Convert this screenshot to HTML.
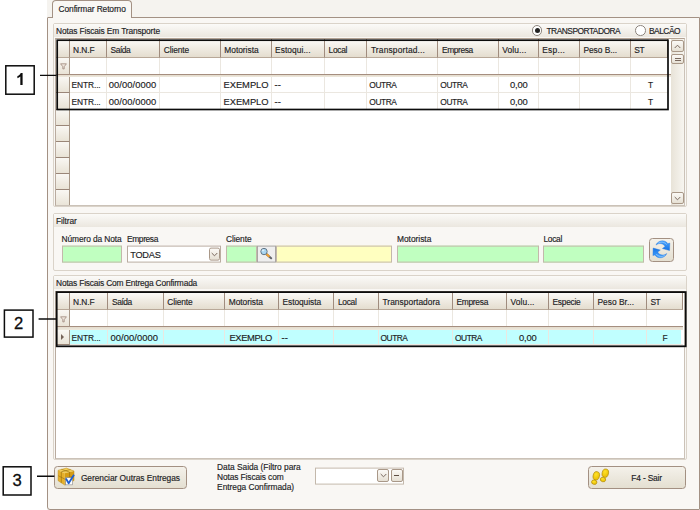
<!DOCTYPE html>
<html><head><meta charset="utf-8"><title>Confirmar Retorno</title>
<style>
html,body{margin:0;padding:0;}
body{width:700px;height:510px;background:#fff;position:relative;overflow:hidden;font-family:"Liberation Sans",sans-serif;font-size:8.4px;color:#1c1c24;-webkit-text-stroke:0.15px #1c1c24;}
div,span{position:absolute;box-sizing:border-box;white-space:nowrap;}
svg{position:absolute;overflow:visible;}
.bg{left:46.5px;top:0;width:653.5px;height:510px;background:#f5f3ef;}
.panel{left:47px;top:17px;width:652.5px;height:492.5px;border:1px solid #a39184;border-radius:1px 0 1px 3px;background:#f9f7f4;}
.tab{left:52px;top:0px;width:80px;height:18px;border:1px solid #a39184;border-bottom:none;border-radius:4px 4px 0 0;background:#f9f7f4;}
.grp{border:1px solid #dad3c9;border-radius:2px;background:#f9f7f4;}
.cap{left:0;top:0;right:0;height:13px;background:linear-gradient(#fbfaf8,#ebe7df);}
.grid{border:1px solid #cbc2b8;border-top-color:#b3a394;border-left-color:#b9ab9f;background:#fff;overflow:hidden;}
.hc{background:linear-gradient(#fcfbf9 0%,#f1ede5 45%,#e4ddcf 100%);border-right:1px solid #a08c7e;border-bottom:1px solid #b8a898;}
.ind{background:linear-gradient(#f9f7f3,#e9e3d6);border-right:1px solid #a89888;border-bottom:1px solid #9a8678;}
.vl{width:1px;background:#ebe7e0;}
.hl{height:1px;background:#ebe7e0;}
.sep{height:4px;background:linear-gradient(#e3dbcc,#eee9de);border-top:1px solid #a58e7f;}
.c2{font-size:9.4px;}
.inp{height:17px;border:1px solid #c3b8ab;transform:translateY(0.6px);}
.green{background:#c0ffc0;}
.yellow{background:#ffffc0;}
.btn{border:1px solid #a39082;border-radius:3.5px;background:linear-gradient(#f4f1ea,#e4dfd1);}
.sb{border:1px solid #a99888;border-radius:2px;background:linear-gradient(#fbf9f6,#e6e0d4);}
</style></head><body>
<div class="bg"></div>
<div class="panel"></div>
<div class="tab"></div>
<div style="left:53px;top:17px;width:78px;height:2px;background:#f9f7f4"></div>
<span  style="left:58.6px;top:3.6px;letter-spacing:-0.105px;">Confirmar Retorno</span>
<div class="grp" style="left:53px;top:23px;width:634px;height:184px;"><div class="cap"></div></div>
<span  style="left:56.1px;top:26px;letter-spacing:-0.134px;">Notas Fiscais Em Transporte</span>
<div style="left:531.7px;top:25.3px;width:10.6px;height:10.6px;border:1px solid #8d857e;border-radius:50%;background:#fff;"></div>
<div style="left:534.5px;top:28px;width:5px;height:5px;border-radius:50%;background:#222;"></div>
<span  style="left:546.5px;top:26.3px;letter-spacing:-0.5px;">TRANSPORTADORA</span>
<div style="left:635.3px;top:25.3px;width:10.6px;height:10.6px;border:1px solid #8d857e;border-radius:50%;background:#fff;"></div>
<span  style="left:649px;top:26.3px;letter-spacing:-0.497px;">BALCÃO</span>
<div class="grid" style="left:55px;top:38px;width:630px;height:168px;">
<div class="hc" style="left:0;top:0;width:13.5px;height:18.5px;"></div>
<div class="hc" style="left:13.5px;top:0;width:37.0px;height:18.5px;"></div>
<div class="hc" style="left:50.5px;top:0;width:53.5px;height:18.5px;"></div>
<div class="hc" style="left:104px;top:0;width:61px;height:18.5px;"></div>
<div class="hc" style="left:165px;top:0;width:50.5px;height:18.5px;"></div>
<div class="hc" style="left:215.5px;top:0;width:53.5px;height:18.5px;"></div>
<div class="hc" style="left:269px;top:0;width:41.5px;height:18.5px;"></div>
<div class="hc" style="left:310.5px;top:0;width:71.0px;height:18.5px;"></div>
<div class="hc" style="left:381.5px;top:0;width:61.5px;height:18.5px;"></div>
<div class="hc" style="left:443px;top:0;width:40px;height:18.5px;"></div>
<div class="hc" style="left:483px;top:0;width:41px;height:18.5px;"></div>
<div class="hc" style="left:524px;top:0;width:50.5px;height:18.5px;"></div>
<div class="hc" style="left:574.5px;top:0;width:37.5px;height:18.5px;"></div>
<div class="ind" style="left:0;top:18.5px;width:13.5px;height:16.0px;border-bottom:none;"></div>
<svg style="left:4.05px;top:24.1px" width="7" height="7" viewBox="0 0 7 7"><path d="M0.6 0.8H6.4L4.2 3.7V5.9H2.8V3.7Z" fill="#efe6dc" stroke="#9a8276" stroke-width="0.75"/></svg>
<div class="vl" style="left:49.5px;top:18.5px;height:16.0px;"></div>
<div class="vl" style="left:103px;top:18.5px;height:16.0px;"></div>
<div class="vl" style="left:164px;top:18.5px;height:16.0px;"></div>
<div class="vl" style="left:214.5px;top:18.5px;height:16.0px;"></div>
<div class="vl" style="left:268px;top:18.5px;height:16.0px;"></div>
<div class="vl" style="left:309.5px;top:18.5px;height:16.0px;"></div>
<div class="vl" style="left:380.5px;top:18.5px;height:16.0px;"></div>
<div class="vl" style="left:442px;top:18.5px;height:16.0px;"></div>
<div class="vl" style="left:482px;top:18.5px;height:16.0px;"></div>
<div class="vl" style="left:523px;top:18.5px;height:16.0px;"></div>
<div class="vl" style="left:573.5px;top:18.5px;height:16.0px;"></div>
<div class="sep" style="left:0;top:34.5px;width:615px;height:3.5999999999999943px;"></div>
<div class="ind" style="left:0;top:38px;width:13.5px;height:16px;"></div>
<div style="left:13.5px;top:38px;width:598.5px;height:15px;background:#fff;"></div>
<div class="vl" style="left:49.5px;top:38px;height:16px;"></div>
<div class="vl" style="left:103px;top:38px;height:16px;"></div>
<div class="vl" style="left:164px;top:38px;height:16px;"></div>
<div class="vl" style="left:214.5px;top:38px;height:16px;"></div>
<div class="vl" style="left:268px;top:38px;height:16px;"></div>
<div class="vl" style="left:309.5px;top:38px;height:16px;"></div>
<div class="vl" style="left:380.5px;top:38px;height:16px;"></div>
<div class="vl" style="left:442px;top:38px;height:16px;"></div>
<div class="vl" style="left:482px;top:38px;height:16px;"></div>
<div class="vl" style="left:523px;top:38px;height:16px;"></div>
<div class="vl" style="left:573.5px;top:38px;height:16px;"></div>
<div class="hl" style="left:13.5px;top:53px;width:598.5px;"></div>
<div class="ind" style="left:0;top:54px;width:13.5px;height:17px;"></div>
<div style="left:13.5px;top:54px;width:598.5px;height:16px;background:#fff;"></div>
<div class="vl" style="left:49.5px;top:54px;height:17px;"></div>
<div class="vl" style="left:103px;top:54px;height:17px;"></div>
<div class="vl" style="left:164px;top:54px;height:17px;"></div>
<div class="vl" style="left:214.5px;top:54px;height:17px;"></div>
<div class="vl" style="left:268px;top:54px;height:17px;"></div>
<div class="vl" style="left:309.5px;top:54px;height:17px;"></div>
<div class="vl" style="left:380.5px;top:54px;height:17px;"></div>
<div class="vl" style="left:442px;top:54px;height:17px;"></div>
<div class="vl" style="left:482px;top:54px;height:17px;"></div>
<div class="vl" style="left:523px;top:54px;height:17px;"></div>
<div class="vl" style="left:573.5px;top:54px;height:17px;"></div>
<div class="hl" style="left:13.5px;top:70px;width:598.5px;"></div>
<div class="ind" style="left:0;top:71px;width:13.5px;height:16px;"></div>
<div class="ind" style="left:0;top:87px;width:13.5px;height:16px;"></div>
<div class="ind" style="left:0;top:103px;width:13.5px;height:16px;"></div>
<div class="ind" style="left:0;top:119px;width:13.5px;height:16px;"></div>
<div class="ind" style="left:0;top:135px;width:13.5px;height:16px;"></div>
<div class="ind" style="left:0;top:151px;width:13.5px;height:17px;"></div>
<div style="left:614.5px;top:0;width:13.5px;height:166px;background:linear-gradient(90deg,#e8e3d8,#f7f5f0);"></div>
<div class="sb" style="left:615px;top:1px;width:13px;height:12px;"></div>
<svg style="left:618px;top:5px" width="7" height="5" viewBox="0 0 7 5"><path d="M0.7 4L3.5 1.2L6.3 4" fill="none" stroke="#7a695f" stroke-width="1"/></svg>
<div class="sb" style="left:615px;top:15px;width:13px;height:10px;"></div>
<div style="left:618.5px;top:18.5px;width:6px;height:1px;background:#7a695e;"></div>
<div style="left:618.5px;top:20.5px;width:6px;height:1px;background:#7a695e;"></div>
<div class="sb" style="left:615px;top:153px;width:13px;height:12px;"></div>
<svg style="left:618px;top:156.5px" width="7" height="5" viewBox="0 0 7 5"><path d="M0.7 1L3.5 3.8L6.3 1" fill="none" stroke="#7a695f" stroke-width="1"/></svg>
</div>
<span  style="left:73px;top:44.65px;letter-spacing:-0.055px;">N.N.F</span>
<span  style="left:110.6px;top:44.65px;letter-spacing:-0.438px;">Saída</span>
<span  style="left:163.7px;top:44.65px;letter-spacing:-0.097px;">Cliente</span>
<span  style="left:224.3px;top:44.65px;letter-spacing:-0.017px;">Motorista</span>
<span  style="left:275.1px;top:44.65px;letter-spacing:0.058px;">Estoqui...</span>
<span  style="left:328.6px;top:44.65px;letter-spacing:-0.306px;">Local</span>
<span  style="left:370.9px;top:44.65px;letter-spacing:0.169px;">Transportad...</span>
<span  style="left:442px;top:44.65px;letter-spacing:-0.374px;">Empresa</span>
<span  style="left:502.3px;top:44.65px;letter-spacing:0.117px;">Volu...</span>
<span  style="left:542.3px;top:44.65px;letter-spacing:0.23px;">Esp...</span>
<span  style="left:583.4px;top:44.65px;letter-spacing:-0.032px;">Peso B...</span>
<span  style="left:634.3px;top:44.65px;letter-spacing:-0.5px;">ST</span>
<span  style="left:71.6px;top:80.07000000000001px;letter-spacing:-0.112px;">ENTR...</span>
<span class="c2" style="left:108.8px;top:79.495px;letter-spacing:0.048px;">00/00/0000</span>
<span class="c2" style="left:223.5px;top:79.495px;letter-spacing:-0.047px;">EXEMPLO</span>
<span class="c2" style="left:274.5px;top:79.495px;letter-spacing:0.125px;">--</span>
<span  style="left:369.3px;top:80.07000000000001px;letter-spacing:-0.423px;">OUTRA</span>
<span  style="left:440.3px;top:80.07000000000001px;letter-spacing:-0.423px;">OUTRA</span>
<span class="c2" style="left:510px;top:79.495px;letter-spacing:-0.188px;">0,00</span>
<span  style="left:648px;top:80.07000000000001px;letter-spacing:-0.5px;">T</span>
<span  style="left:71.6px;top:96.57000000000001px;letter-spacing:-0.112px;">ENTR...</span>
<span class="c2" style="left:108.8px;top:95.995px;letter-spacing:0.048px;">00/00/0000</span>
<span class="c2" style="left:223.5px;top:95.995px;letter-spacing:-0.047px;">EXEMPLO</span>
<span class="c2" style="left:274.5px;top:95.995px;letter-spacing:0.125px;">--</span>
<span  style="left:369.3px;top:96.57000000000001px;letter-spacing:-0.423px;">OUTRA</span>
<span  style="left:440.3px;top:96.57000000000001px;letter-spacing:-0.423px;">OUTRA</span>
<span class="c2" style="left:510px;top:95.995px;letter-spacing:-0.188px;">0,00</span>
<span  style="left:648px;top:96.57000000000001px;letter-spacing:-0.5px;">T</span>
<div class="grp" style="left:53px;top:213px;width:634px;height:58px;"><div class="cap"></div></div>
<span  style="left:56.1px;top:216px;letter-spacing:-0.129px;">Filtrar</span>
<span  style="left:61.6px;top:233.9px;letter-spacing:-0.104px;">Número da Nota</span>
<div class="inp green" style="left:62px;top:245px;width:60px;"></div>
<span  style="left:127px;top:233.9px;letter-spacing:-0.359px;">Empresa</span>
<div class="inp" style="left:127px;top:245px;width:94px;background:#fff;border-color:#b9aca0;"></div>
<span  style="left:130.2px;top:249.7px;letter-spacing:-0.217px;font-size:9.2px;">TODAS</span>
<div class="sb" style="left:208.5px;top:247px;width:11px;height:13px;transform:translateY(0.6px);"></div>
<svg style="left:210.5px;top:252.1px" width="7" height="5" viewBox="0 0 7 5"><path d="M0.7 1L3.5 3.8L6.3 1" fill="none" stroke="#7a695f" stroke-width="1"/></svg>
<span  style="left:226px;top:233.9px;letter-spacing:-0.083px;">Cliente</span>
<div class="inp green" style="left:226px;top:245px;width:31px;"></div>
<div class="inp" style="left:257px;top:245px;width:19px;background:#efefef;border-color:#a9a6a2;"></div>
<svg style="left:250px;top:240px" width="35" height="28" viewBox="0 0 638 510"><path d="M305 262L385 332" stroke="#63676c" stroke-width="38" stroke-linecap="round"/><path d="M298 256L354 305" stroke="#f2a030" stroke-width="38"/><circle cx="255" cy="210" r="58" fill="#a9d6f2" stroke="#647482" stroke-width="18"/><ellipse cx="238" cy="190" rx="24" ry="17" fill="#e4f3fc" opacity="0.85"/></svg>
<div class="inp yellow" style="left:276px;top:245px;width:116px;"></div>
<span  style="left:397px;top:233.9px;letter-spacing:-0.017px;">Motorista</span>
<div class="inp green" style="left:397px;top:245px;width:142px;"></div>
<span  style="left:543.5px;top:233.9px;letter-spacing:-0.306px;">Local</span>
<div class="inp green" style="left:543px;top:245px;width:101px;"></div>
<div class="btn" style="left:649px;top:238px;width:25px;height:23.5px;"></div>
<svg style="left:640px;top:230px" width="50" height="40" viewBox="0 0 638 510"><defs><linearGradient id="rg" x1="0" y1="0" x2="0" y2="1"><stop offset="0" stop-color="#4aa6ff"/><stop offset="1" stop-color="#1672e4"/></linearGradient></defs>
<g id="ra" fill="url(#rg)" stroke="#1a6fdc" stroke-width="5" stroke-linejoin="round"><path d="M204 192C222 138 312 112 356 174L380 166L377 262L286 236L320 210C296 168 244 160 204 192Z"/><path d="M232 168C262 146 310 150 336 182" fill="none" stroke="#9fd0ff" stroke-width="9" stroke-linecap="round"/></g>
<use href="#ra" transform="rotate(180 272.5 246)"/></svg>
<div class="grp" style="left:53px;top:275px;width:634px;height:185px;"><div class="cap"></div></div>
<span  style="left:56.1px;top:278.0px;letter-spacing:-0.182px;">Notas Fiscais Com Entrega Confirmada</span>
<div class="grid" style="left:55px;top:291px;width:630px;height:168px;">
<div class="hc" style="left:0;top:0;width:13.5px;height:18px;"></div>
<div class="hc" style="left:13.5px;top:0;width:38.5px;height:18px;"></div>
<div class="hc" style="left:52px;top:0;width:55.5px;height:18px;"></div>
<div class="hc" style="left:107.5px;top:0;width:61.5px;height:18px;"></div>
<div class="hc" style="left:169px;top:0;width:53.5px;height:18px;"></div>
<div class="hc" style="left:222.5px;top:0;width:55.5px;height:18px;"></div>
<div class="hc" style="left:278px;top:0;width:44.5px;height:18px;"></div>
<div class="hc" style="left:322.5px;top:0;width:74.5px;height:18px;"></div>
<div class="hc" style="left:397px;top:0;width:53.5px;height:18px;"></div>
<div class="hc" style="left:450.5px;top:0;width:42.5px;height:18px;"></div>
<div class="hc" style="left:493px;top:0;width:44.5px;height:18px;"></div>
<div class="hc" style="left:537.5px;top:0;width:53.0px;height:18px;"></div>
<div class="hc" style="left:590.5px;top:0;width:36.5px;height:18px;"></div>
<div class="ind" style="left:0;top:18px;width:13.5px;height:16px;border-bottom:none;"></div>
<svg style="left:4.05px;top:23.6px" width="7" height="7" viewBox="0 0 7 7"><path d="M0.6 0.8H6.4L4.2 3.7V5.9H2.8V3.7Z" fill="#efe6dc" stroke="#9a8276" stroke-width="0.75"/></svg>
<div class="vl" style="left:51px;top:18px;height:16px;"></div>
<div class="vl" style="left:106.5px;top:18px;height:16px;"></div>
<div class="vl" style="left:168px;top:18px;height:16px;"></div>
<div class="vl" style="left:221.5px;top:18px;height:16px;"></div>
<div class="vl" style="left:277px;top:18px;height:16px;"></div>
<div class="vl" style="left:321.5px;top:18px;height:16px;"></div>
<div class="vl" style="left:396px;top:18px;height:16px;"></div>
<div class="vl" style="left:449.5px;top:18px;height:16px;"></div>
<div class="vl" style="left:492px;top:18px;height:16px;"></div>
<div class="vl" style="left:536.5px;top:18px;height:16px;"></div>
<div class="vl" style="left:589.5px;top:18px;height:16px;"></div>
<div class="sep" style="left:0;top:34px;width:627px;height:3.5px;"></div>
<div class="ind" style="left:0;top:38px;width:13.5px;height:15px;"></div>
<div style="left:5px;top:42.3px;width:0;height:0;border-left:3.5px solid #756257;border-top:3.1px solid transparent;border-bottom:3.1px solid transparent;"></div>
<div style="left:13.5px;top:38px;width:611.5px;height:14px;background:#c0ffff;"></div>
<div class="vl" style="left:51px;top:38px;height:15px;"></div>
<div class="vl" style="left:106.5px;top:38px;height:15px;"></div>
<div class="vl" style="left:168px;top:38px;height:15px;"></div>
<div class="vl" style="left:221.5px;top:38px;height:15px;"></div>
<div class="vl" style="left:277px;top:38px;height:15px;"></div>
<div class="vl" style="left:321.5px;top:38px;height:15px;"></div>
<div class="vl" style="left:396px;top:38px;height:15px;"></div>
<div class="vl" style="left:449.5px;top:38px;height:15px;"></div>
<div class="vl" style="left:492px;top:38px;height:15px;"></div>
<div class="vl" style="left:536.5px;top:38px;height:15px;"></div>
<div class="vl" style="left:589.5px;top:38px;height:15px;"></div>
<div class="hl" style="left:13.5px;top:52px;width:613.5px;"></div>
</div>
<span  style="left:73px;top:297.15000000000003px;letter-spacing:-0.055px;">N.N.F</span>
<span  style="left:112px;top:297.15000000000003px;letter-spacing:-0.418px;">Saída</span>
<span  style="left:167.3px;top:297.15000000000003px;letter-spacing:-0.111px;">Cliente</span>
<span  style="left:228.7px;top:297.15000000000003px;letter-spacing:-0.017px;">Motorista</span>
<span  style="left:282.5px;top:297.15000000000003px;letter-spacing:-0.061px;">Estoquista</span>
<span  style="left:338px;top:297.15000000000003px;letter-spacing:-0.306px;">Local</span>
<span  style="left:382.5px;top:297.15000000000003px;letter-spacing:0.039px;">Transportadora</span>
<span  style="left:456.5px;top:297.15000000000003px;letter-spacing:-0.288px;">Empresa</span>
<span  style="left:510.5px;top:297.15000000000003px;letter-spacing:0.103px;">Volu...</span>
<span  style="left:552.5px;top:297.15000000000003px;letter-spacing:-0.257px;">Especie</span>
<span  style="left:597.5px;top:297.15000000000003px;letter-spacing:0.019px;">Peso Br...</span>
<span  style="left:650.5px;top:297.15000000000003px;letter-spacing:-0.5px;">ST</span>
<span  style="left:71.6px;top:332.57px;letter-spacing:-0.112px;">ENTR...</span>
<span class="c2" style="left:110.5px;top:331.995px;letter-spacing:0.058px;">00/00/0000</span>
<span class="c2" style="left:229.5px;top:331.995px;letter-spacing:-0.404px;">EXEMPLO</span>
<span class="c2" style="left:281.5px;top:331.995px;letter-spacing:0.125px;">--</span>
<span  style="left:380.5px;top:332.57px;letter-spacing:-0.463px;">OUTRA</span>
<span  style="left:455px;top:332.57px;letter-spacing:-0.463px;">OUTRA</span>
<span class="c2" style="left:519px;top:331.995px;letter-spacing:-0.188px;">0,00</span>
<span  style="left:662.5px;top:332.57px;letter-spacing:-0.5px;">F</span>
<div class="btn" style="left:54px;top:466px;width:133px;height:22.5px;"></div>
<span  style="left:80.9px;top:473.2px;letter-spacing:-0.04px;">Gerenciar Outras Entregas</span>
<svg style="left:50px;top:460px" width="40" height="35" viewBox="0 0 583 510">
<path d="M118 150L240 118L350 160L215 192Z" fill="#f4cf58"/>
<path d="M118 150L215 192V366L118 302Z" fill="#e6b02a"/>
<path d="M215 192L350 160V300L215 366Z" fill="#d59c14"/>
<path d="M165 135L285 176V332M300 138L165 172V334M118 228L215 278L350 232" fill="none" stroke="#8f6508" stroke-width="10" opacity="0.8"/>
<path d="M118 150L240 118L350 160V300L215 366L118 302Z" fill="none" stroke="#b98a12" stroke-width="7" stroke-linejoin="round"/>
<rect x="228" y="258" width="100" height="104" fill="#fdfdfd" stroke="#8c8c8c" stroke-width="9"/>
<path d="M232 270L272 338L350 215" fill="none" stroke="#1e5fd2" stroke-width="26" stroke-linejoin="round"/>
</svg>
<span  style="left:217.1px;top:462.1px;letter-spacing:-0.029px;">Data Saida (Filtro para</span>
<span  style="left:217.1px;top:472.1px;letter-spacing:-0.113px;">Notas Fiscais com</span>
<span  style="left:217.1px;top:482px;letter-spacing:-0.039px;">Entrega Confirmada)</span>
<div class="inp" style="left:315px;top:467px;width:89px;height:17px;background:#fff;"></div>
<div class="sb" style="left:377px;top:468.5px;width:12px;height:13.5px;"></div>
<svg style="left:379.5px;top:473px" width="7" height="5" viewBox="0 0 7 5"><path d="M0.7 1L3.5 3.8L6.3 1" fill="none" stroke="#7a695f" stroke-width="1"/></svg>
<div class="sb" style="left:390.5px;top:468.5px;width:12px;height:13.5px;"></div>
<div style="left:394px;top:474.5px;width:5px;height:1.5px;background:#5e4e44;"></div>
<div class="btn" style="left:588px;top:466px;width:98px;height:22.5px;"></div>
<span  style="left:631.3px;top:473.2px;letter-spacing:-0.169px;">F4 - Sair</span>
<svg style="left:585px;top:462px" width="40" height="30" viewBox="0 0 680 510"><defs><radialGradient id="fg" cx="0.4" cy="0.35" r="0.7"><stop offset="0" stop-color="#ffe22a"/><stop offset="1" stop-color="#e8bb00"/></radialGradient></defs>
<g fill="url(#fg)" stroke="#a98300" stroke-width="10">
<ellipse cx="192" cy="235" rx="54" ry="72" transform="rotate(14 192 235)"/><ellipse cx="157" cy="343" rx="46" ry="38" transform="rotate(14 157 343)"/>
<ellipse cx="345" cy="190" rx="54" ry="72" transform="rotate(14 345 190)"/><ellipse cx="306" cy="298" rx="46" ry="38" transform="rotate(14 306 298)"/>
</g></svg>
<svg style="left:0;top:0" width="700" height="510" viewBox="0 0 700 510" fill="none" stroke="#0c0c0c">
<rect x="57.2" y="40.2" width="610.8" height="69.3" stroke-width="1.7"/>
<rect x="56.7" y="292.1" width="629" height="54.2" stroke-width="1.8"/>
<g stroke-width="1.5" fill="#fff">
<rect x="5.8" y="65.8" width="28.4" height="28.4"/>
<rect x="4.4" y="310.1" width="28.6" height="27"/>
<rect x="3.2" y="466.8" width="27.8" height="28.2"/>
</g>
<g stroke-width="1.4"><path d="M40 75.4H56.5M38.6 319H56M37 476.3H54.4"/></g>
<path stroke="none" fill="#0c0c0c" transform="translate(13.26,85.0) scale(0.0081,-0.0081)" d="M1153 0H872V1059Q718 915 509 846V1101Q619 1137 748 1237.5Q877 1338 925 1472H1153Z"/>
</svg>
<span style="left:4.4px;top:313.6px;width:28.6px;text-align:center;font-size:16.6px;line-height:19px;color:#0c0c0c;-webkit-text-stroke:0.3px #0c0c0c;">2</span>
<span style="left:3.2px;top:470.7px;width:27.8px;text-align:center;font-size:16.6px;line-height:19px;color:#0c0c0c;-webkit-text-stroke:0.3px #0c0c0c;">3</span>
</body></html>
